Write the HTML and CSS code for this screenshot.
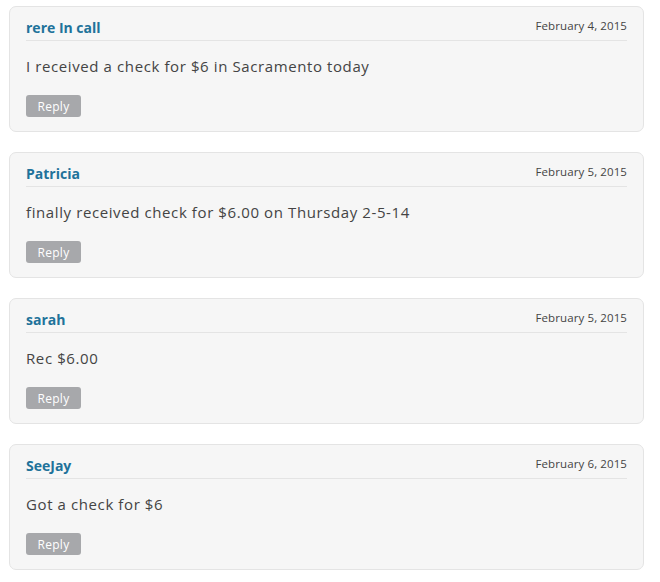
FILE: index.html
```html
<!DOCTYPE html>
<html>
<head>
<meta charset="utf-8">
<link rel="stylesheet" href="styles.css">
</head>
<body>
<div class="list">
  <div class="card">
    <div class="head"><span class="name">rere In call</span><span class="date">February 4, 2015</span></div>
    <p class="text">I received a check for $6 in Sacramento today</p>
    <button class="reply">Reply</button>
  </div>
  <div class="card">
    <div class="head"><span class="name">Patricia</span><span class="date">February 5, 2015</span></div>
    <p class="text">finally received check for $6.00 on Thursday 2-5-14</p>
    <button class="reply">Reply</button>
  </div>
  <div class="card">
    <div class="head"><span class="name">sarah</span><span class="date">February 5, 2015</span></div>
    <p class="text">Rec $6.00</p>
    <button class="reply">Reply</button>
  </div>
  <div class="card">
    <div class="head"><span class="name">SeeJay</span><span class="date">February 6, 2015</span></div>
    <p class="text">Got a check for $6</p>
    <button class="reply">Reply</button>
  </div>
</div>
</body>
</html>
```
FILE: styles.css
```css
html, body {
  margin: 0;
  padding: 0;
  background: #ffffff;
}
body {
  font-family: "Open Sans", "Liberation Sans", sans-serif;
  color: #444444;
}
.list {
  display: flex;
  flex-direction: column;
  gap: 20px;
  padding: 6px 16px 0 9px;
}
.card {
  background: #f6f6f6;
  border: 1px solid #e4e4e4;
  border-radius: 7px;
  padding: 0 16px 14px;
  box-sizing: border-box;
  height: 126px;
}
.head {
  display: flex;
  justify-content: space-between;
  align-items: flex-start;
  height: 34px;
  border-bottom: 1px solid #e4e4e4;
  box-sizing: border-box;
  padding-top: 12px;
}
.name {
  font-weight: 700;
  font-size: 14px;
  color: #21729a;
  line-height: 18px;
}
.date {
  font-size: 11.5px;
  letter-spacing: 0.1px;
  color: #444444;
  line-height: 14px;
}
.text {
  margin: 0;
  padding-top: 15px;
  font-size: 15px;
  letter-spacing: 0.6px;
  line-height: 20px;
  color: #444444;
  height: 54px;
  box-sizing: border-box;
}
.reply {
  display: block;
  width: 55px;
  height: 22px;
  border: 0;
  border-radius: 3px;
  background: #a7a8ab;
  color: #ffffff;
  font-family: inherit;
  font-size: 12px;
  letter-spacing: 0.3px;
  padding: 0;
}
```
